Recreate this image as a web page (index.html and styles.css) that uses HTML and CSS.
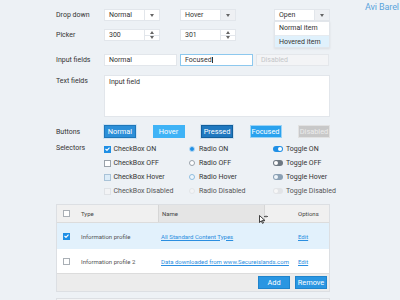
FILE: index.html
```html
<!DOCTYPE html>
<html>
<head>
<meta charset="utf-8">
<link rel="stylesheet" href="styles.css">
</head>
<body>
<div class="wrap">
  <div class="page">
    <div class="row r-drop">
      <div class="label">Drop down</div>
      <div class="select"><span class="val">Normal</span><span class="arrow"><svg width="4" height="3" viewBox="0 0 4 3"><path d="M0 0h4L2 3z" fill="#666"/></svg></span></div>
      <div class="select hover sp20"><span class="val">Hover</span><span class="arrow"><svg width="4" height="3" viewBox="0 0 4 3"><path d="M0 0h4L2 3z" fill="#666"/></svg></span></div>
      <div class="select open sp38"><span class="val">Open</span><span class="arrow"><svg width="4" height="3" viewBox="0 0 4 3"><path d="M0 0h4L2 3z" fill="#666"/></svg></span>
        <div class="menu">
          <div class="item">Normal item</div>
          <div class="item hovered">Hovered item</div>
        </div>
      </div>
    </div>

    <div class="row r-pick">
      <div class="label">Picker</div>
      <div class="select"><span class="val">300</span><span class="spin"><span class="up"><svg width="4" height="3" viewBox="0 0 4 3"><path d="M0 3h4L2 0z" fill="#666"/></svg></span><span class="dn"><svg width="4" height="3" viewBox="0 0 4 3"><path d="M0 0h4L2 3z" fill="#666"/></svg></span></span></div>
      <div class="select sp20"><span class="val">301</span><span class="spin"><span class="up"><svg width="4" height="3" viewBox="0 0 4 3"><path d="M0 3h4L2 0z" fill="#666"/></svg></span><span class="dn"><svg width="4" height="3" viewBox="0 0 4 3"><path d="M0 0h4L2 3z" fill="#666"/></svg></span></span></div>
    </div>

    <div class="row r-input">
      <div class="label">Input fields</div>
      <div class="inputs">
        <div class="field">Normal</div>
        <div class="field focused">Focused<span class="caret"></span></div>
        <div class="field disabled">Disabled</div>
      </div>
    </div>

    <div class="row r-text">
      <div class="label">Text fields</div>
      <div class="textarea">Input field</div>
    </div>

    <div class="row r-btn">
      <div class="label">Buttons</div>
      <div class="btns">
        <div class="btn normal">Normal</div>
        <div class="btn hov">Hover</div>
        <div class="btn pressed">Pressed</div>
        <div class="btn focus">Focused</div>
        <div class="btn dis">Disabled</div>
      </div>
    </div>

    <div class="row r-sel">
      <div class="label">Selectors</div>
      <div class="sel-grid">
        <div class="opt"><span class="cb on"><svg width="5" height="4" viewBox="0 0 5 4"><path d="M0.5 2l1.5 1.4L4.5 0.6" fill="none" stroke="#fff" stroke-width="1.1"/></svg></span>CheckBox ON</div>
        <div class="opt"><span class="rd on"></span>Radio ON</div>
        <div class="opt"><span class="tg on"></span>Toggle ON</div>
        <div class="opt"><span class="cb off"></span>CheckBox OFF</div>
        <div class="opt"><span class="rd off"></span>Radio OFF</div>
        <div class="opt"><span class="tg off"></span>Toggle OFF</div>
        <div class="opt"><span class="cb hv"></span>CheckBox Hover</div>
        <div class="opt"><span class="rd hv"></span>Radio Hover</div>
        <div class="opt"><span class="tg hv"></span>Toggle Hover</div>
        <div class="opt dim"><span class="cb ds"></span>CheckBox Disabled</div>
        <div class="opt dim"><span class="rd ds"></span>Radio Disabled</div>
        <div class="opt dim"><span class="tg ds"></span>Toggle Disabled</div>
      </div>
    </div>

    <div class="tbl">
      <div class="tr head">
        <div class="td c1"><span class="cb off"></span></div>
        <div class="td c2">Type</div>
        <div class="td c3 namecol">Name
          <svg class="cursor" width="9" height="9" viewBox="0 0 9 9"><path d="M0.5 0.5v7l1.8-1.7 1.2 2.6 1-0.5-1.2-2.5h2.5z" fill="#fff" stroke="#111" stroke-width="0.8"/><path d="M5.5 1.5h3M6.3 0.8l-0.8 0.7 0.8 0.7M7.7 0.8l0.8 0.7-0.8 0.7" fill="none" stroke="#111" stroke-width="0.6"/></svg>
        </div>
        <div class="td c4">Options</div>
      </div>
      <div class="tr sel">
        <div class="td c1"><span class="cb on"><svg width="5" height="4" viewBox="0 0 5 4"><path d="M0.5 2l1.5 1.4L4.5 0.6" fill="none" stroke="#fff" stroke-width="1.1"/></svg></span></div>
        <div class="td c2">Information profile</div>
        <div class="td c3"><a class="lnk">All Standard Content Types</a></div>
        <div class="td c4"><a class="lnk">Edit</a></div>
      </div>
      <div class="tr r2">
        <div class="td c1"><span class="cb off"></span></div>
        <div class="td c2">Information profile 2</div>
        <div class="td c3"><a class="lnk">Data downloaded from www.Secureislands.com</a></div>
        <div class="td c4"><a class="lnk">Edit</a></div>
      </div>
      <div class="tfoot">
        <div class="fbtn add">Add</div>
        <div class="fbtn">Remove</div>
      </div>
    </div>
    <div class="panel"></div>
  </div>
  <div class="author">Avi Barel</div>
</div>
</body>
</html>
```

FILE: styles.css
```css
* { box-sizing: border-box; margin: 0; padding: 0; }
html, body { width: 400px; height: 300px; overflow: hidden; }
body {
  background: #edf1f5;
  font-family: Roboto, "Liberation Sans", sans-serif;
  font-size: 7px;
  color: #333;
}
.wrap { display: flex; padding-left: 56px; }
.page { width: 274px; flex: none; padding-top: 9px; }
.author {
  margin-left: 35px;
  padding-top: 2px;
  font-size: 9px;
  letter-spacing: -0.1px;
  color: #5ba4dc;
  white-space: nowrap;
}
.row { display: flex; align-items: center; }
.label { width: 48px; flex: none; color: #333; }

.sp20 { margin-left: 20px; }
.sp38 { margin-left: 38px; }

.select {
  width: 56px;
  height: 12px;
  background: #fff;
  border: 1px solid #e2e6eb;
  display: flex;
  position: relative;
}
.select .val { flex: 1; padding-left: 4px; line-height: 10px; }
.select .arrow {
  width: 15px;
  border-left: 1px solid #e2e6eb;
  display: flex;
  align-items: center;
  justify-content: center;
}
.select.hover .arrow, .select.open .arrow { background: #eef0f3; }
.menu {
  position: absolute;
  top: 11px;
  left: -1px;
  width: 56px;
  background: #fff;
  border: 1px solid #e2e6eb;
  box-shadow: 0 1px 2px rgba(0,0,0,0.08);
  z-index: 2;
}
.item { height: 12.5px; line-height: 12px; padding-left: 4px; }
.item.hovered { background: #e0f1fc; border-top: 1px solid #e6ebf0; }

.r-pick { margin-top: 8px; }
.spin {
  width: 15px;
  border-left: 1px solid #e2e6eb;
  display: flex;
  flex-direction: column;
}
.spin span { flex: 1; display: flex; align-items: center; justify-content: center; }
.spin .up { border-bottom: 1px solid #e2e6eb; }

.r-input { margin-top: 13px; }
.inputs { display: flex; gap: 3px; }
.field {
  width: 73px;
  height: 12px;
  background: #fff;
  border: 1px solid #e2e6eb;
  padding-left: 4px;
  line-height: 10px;
}
.field.focused { border-color: #8dc8ee; }
.caret { display: inline-block; width: 0.6px; height: 6px; background: #333; vertical-align: -1px; margin-left: 0.5px; }
.field.disabled { background: #f3f4f6; color: #c4c6c9; border-color: #e4e7eb; }

.r-text { margin-top: 9px; align-items: flex-start; }
.r-text .label { padding-top: 2px; }
.textarea {
  width: 226px;
  height: 42px;
  background: #fff;
  border: 1px solid #e2e6eb;
  padding: 2px 4px;
}

.r-btn { margin-top: 8px; }
.btns { width: 226px; display: flex; justify-content: space-between; }
.btn {
  width: 32px;
  height: 13px;
  color: #fff;
  font-size: 7.4px;
  display: flex;
  align-items: center;
  justify-content: center;
  border: 1px solid transparent;
}
.btn.normal { background: #2c8fd8; border-color: #1f77b9; box-shadow: 0 0 0 1px #cfe3f3; }
.btn.hov { background: #3fb3f6; border-color: #3fb3f6; }
.btn.pressed { background: #1f78bf; border-color: #135f9c; box-shadow: 0 0 0 1px #cfe0ee; }
.btn.focus { background: #2aa2ee; border-color: #9ad3f6; }
.btn.dis { background: #c8c8c8; border-color: #e2e2e2; color: #ececec; }

.r-sel { margin-top: 4px; align-items: flex-start; }
.r-sel .label { padding-top: 2px; }
.sel-grid {
  display: grid;
  grid-template-columns: 85px 84px 57px;
  grid-auto-rows: 14px;
}
.opt {
  display: flex;
  align-items: center;
  gap: 2px;
  color: #333;
  white-space: nowrap;
  height: 14px;
}
.opt.dim { color: #555; }

.cb {
  width: 7px;
  height: 7px;
  flex: none;
  border: 1px solid #9aa2aa;
  background: #fff;
  display: inline-flex;
  align-items: center;
  justify-content: center;
  margin-right: 0.5px;
}
.cb.on { background: #1f8fe5; border-color: #1f8fe5; }
.cb.hv { background: #dcecf8; border-color: #a9c3d8; }
.cb.ds { background: #f2f3f5; border-color: #dfe2e6; }

.rd {
  width: 6px;
  height: 6px;
  flex: none;
  border-radius: 50%;
  border: 1px solid #9aa2aa;
  background: #fff;
  margin-right: 2px;
}
.rd.on { background: #1f8fe5; border-color: #b9dbf5; }
.rd.hv { background: #eef6fc; border-color: #8ebcdf; }
.rd.ds { background: #f3f4f6; border-color: #e2e5e9; }

.tg {
  width: 10px;
  height: 6px;
  flex: none;
  border-radius: 3px;
  position: relative;
  margin-right: 1px;
}
.tg::after {
  content: "";
  position: absolute;
  top: 1px;
  width: 4px;
  height: 4px;
  border-radius: 50%;
  background: #fff;
}
.tg.on { background: #1f8fe5; }
.tg.on::after { right: 1px; }
.tg.off { background: #6e7882; }
.tg.off::after { left: 1px; }
.tg.hv { background: #8aa0b4; }
.tg.hv::after { left: 1px; background: #eef4f9; }
.tg.ds { background: #e2e4e7; }
.tg.ds::after { left: 1px; background: #f7f7f7; }

.tbl {
  margin-top: 6px;
  width: 274px;
  border: 1px solid #dcdfe3;
  background: #fff;
  font-size: 6px;
  color: #555;
}
.tr { display: flex; height: 24px; }
.tr.head { height: 18px; background: #f0f0f0; border-bottom: 1px solid #dcdcdc; color: #444; }
.tr.sel { background: #e2f1fc; height: 26px; }
.td { display: flex; align-items: center; white-space: nowrap; }
.c1 { width: 19px; justify-content: center; padding-left: 1px; }
.c2 { width: 82px; padding-left: 5px; }
.c3 { width: 107px; padding-left: 3px; }
.c4 { flex: 1; padding-left: 33px; }
.namecol {
  background: #e5e5e5;
  border-left: 1px solid #d6d6d6;
  border-right: 1px solid #d6d6d6;
  position: relative;
}
.cursor { position: absolute; right: -4px; top: 10px; }
.lnk { color: #2a8ee0; text-decoration: underline; }
.tr .cb.off { border-color: #a9afb5; }

.tfoot {
  height: 18px;
  background: #ececec;
  border-top: 1px solid #dcdcdc;
  display: flex;
  justify-content: flex-end;
  align-items: center;
  gap: 5px;
  padding-right: 2px;
}
.fbtn {
  width: 32px;
  height: 13px;
  background: #2a96e2;
  border: 1px solid #1f84cc;
  color: #fff;
  font-size: 7.4px;
  display: flex;
  align-items: center;
  justify-content: center;
}
.panel {
  margin-top: 6px;
  width: 274px;
  height: 20px;
  background: #f3f4f5;
  border: 1px solid #dcdfe3;
}
```
